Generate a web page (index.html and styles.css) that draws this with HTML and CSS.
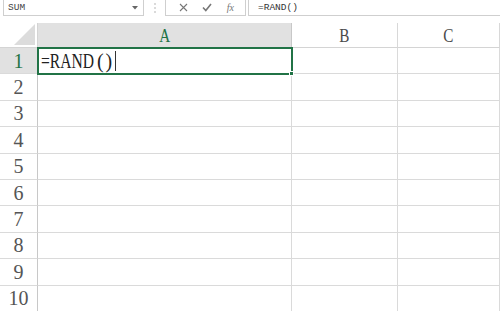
FILE: index.html
```html
<!DOCTYPE html>
<html>
<head>
<meta charset="utf-8">
<link rel="stylesheet" href="styles.css">
</head>
<body>
<div class="app">
  <div class="topbar">
    <div class="namebox">
      <span class="name">SUM</span>
      <svg class="arrow" width="6" height="4" viewBox="0 0 6 4"><path d="M0 0H6L3 3.5Z" fill="#666"/></svg>
    </div>
    <div class="sep">
      <svg width="2" height="12" viewBox="0 0 2 12"><circle cx="1" cy="2" r="0.8" fill="#aaa"/><circle cx="1" cy="6" r="0.8" fill="#aaa"/><circle cx="1" cy="10" r="0.8" fill="#aaa"/></svg>
    </div>
    <div class="fxbtns">
      <svg width="9" height="9" viewBox="0 0 9 9"><path d="M1 1L8 8M8 1L1 8" stroke="#777" stroke-width="1.1" fill="none"/></svg>
      <svg width="10" height="9" viewBox="0 0 10 9"><path d="M1 4.5L3.8 7.5L9 1" stroke="#777" stroke-width="1.6" fill="none"/></svg>
      <span class="fx">fx</span>
    </div>
    <div class="fxinput">=RAND()</div>
  </div>
  <div class="grid">
    <div class="corner"><div class="tri"></div></div>
    <div class="colh sel"><span class="ltr">A</span></div>
    <div class="colh"><span class="ltr">B</span></div>
    <div class="colh"><span class="ltr">C</span></div>

    <div class="rowh sel">1</div>
    <div class="cell active"><span class="fn">=RAND</span><span class="par">()</span><span class="caret"></span></div>
    <div class="cell"></div>
    <div class="cell"></div>

    <div class="rowh">2</div><div class="cell"></div><div class="cell"></div><div class="cell"></div>
    <div class="rowh">3</div><div class="cell"></div><div class="cell"></div><div class="cell"></div>
    <div class="rowh">4</div><div class="cell"></div><div class="cell"></div><div class="cell"></div>
    <div class="rowh">5</div><div class="cell"></div><div class="cell"></div><div class="cell"></div>
    <div class="rowh">6</div><div class="cell"></div><div class="cell"></div><div class="cell"></div>
    <div class="rowh">7</div><div class="cell"></div><div class="cell"></div><div class="cell"></div>
    <div class="rowh">8</div><div class="cell"></div><div class="cell"></div><div class="cell"></div>
    <div class="rowh">9</div><div class="cell"></div><div class="cell"></div><div class="cell"></div>
    <div class="rowh">10</div><div class="cell"></div><div class="cell"></div><div class="cell"></div>
  </div>
</div>
</body>
</html>
```

FILE: styles.css
```css
html, body {
  margin: 0;
  padding: 0;
  background: #fff;
}
.app {
  width: 500px;
  height: 311px;
  overflow: hidden;
  background: #fff;
}
.topbar {
  display: flex;
  height: 16px;
  align-items: stretch;
}
.namebox {
  box-sizing: border-box;
  width: 141px;
  margin-left: 3px;
  border: 1px solid #cfcfcf;
  border-top: none;
  display: flex;
  align-items: center;
  justify-content: space-between;
  padding: 0 5px 0 4px;
}
.name {
  font-family: "Liberation Mono", monospace;
  font-size: 9.5px;
  color: #444;
}
.arrow {
  display: block;
}
.sep {
  width: 21px;
  display: flex;
  align-items: center;
  justify-content: center;
}
.fxbtns {
  box-sizing: border-box;
  width: 81px;
  border: 1px solid #cfcfcf;
  border-top: none;
  display: flex;
  align-items: center;
  justify-content: space-around;
  padding: 0 4px 0 6px;
}
.fx {
  font-family: "Liberation Serif", serif;
  font-style: italic;
  font-size: 10px;
  color: #777;
}
.fxinput {
  flex: 1;
  margin-left: 2px;
  border-left: 1px solid #cfcfcf;
  border-bottom: 1px solid #cfcfcf;
  padding-left: 9px;
  font-family: "Liberation Mono", monospace;
  font-size: 9.5px;
  color: #333;
  display: flex;
  align-items: center;
}
.grid {
  margin-top: 7px;
  display: grid;
  grid-template-columns: 38px 254px 106px 102px;
  grid-template-rows: 25px repeat(10, 26.4px);
}
.corner {
  box-sizing: border-box;
  border-right: 1px solid #d4d4d4;
  border-bottom: 1px solid #d4d4d4;
  display: flex;
  align-items: flex-end;
  justify-content: flex-end;
  padding: 0 2px 2px 0;
}
.tri {
  width: 21px;
  height: 21px;
  background: #dcdcdc;
  clip-path: polygon(100% 0, 100% 100%, 0 100%);
}
.colh {
  box-sizing: border-box;
  border-right: 1px solid #d8d8d8;
  border-bottom: 1px solid #d4d4d4;
  display: flex;
  align-items: center;
  justify-content: center;
  font-family: "Liberation Serif", serif;
  font-size: 19px;
  color: #4a4a4a;
  padding-top: 1px;
}
.ltr {
  display: inline-block;
  transform: scaleX(0.8);
}
.colh.sel {
  background: #e1e1e1;
  color: #217346;
  border-bottom-color: #217346;
  border-right-color: #c8c8c8;
}
.rowh {
  box-sizing: border-box;
  border-right: 1px solid #c8c8c8;
  border-bottom: 1px solid #dadada;
  display: flex;
  align-items: center;
  justify-content: center;
  font-family: "Liberation Serif", serif;
  font-size: 20px;
  color: #555;
  padding-top: 1px;
}
.rowh.sel {
  background: #e1e1e1;
  color: #217346;
}
.cell {
  box-sizing: border-box;
  border-right: 1px solid #dadada;
  border-bottom: 1px solid #dadada;
}
.cell.active {
  position: relative;
  outline: 2px solid #217346;
  outline-offset: -1px;
  display: flex;
  align-items: center;
  padding-left: 3px;
  padding-top: 1px;
  font-family: "Liberation Serif", serif;
  font-size: 20px;
  color: #222;
}
.cell.active::after {
  content: "";
  position: absolute;
  right: -3px;
  bottom: -3px;
  width: 5px;
  height: 5px;
  background: #217346;
  border: 1px solid #fff;
  box-sizing: border-box;
}
.fn {
  display: inline-block;
  transform: scaleX(0.78);
  transform-origin: left center;
  margin-right: -15px;
}
.par {
  margin-left: 3px;
  letter-spacing: 2px;
}
.caret {
  display: block;
  width: 1px;
  height: 20px;
  background: #333;
  margin-left: 1px;
}
```
